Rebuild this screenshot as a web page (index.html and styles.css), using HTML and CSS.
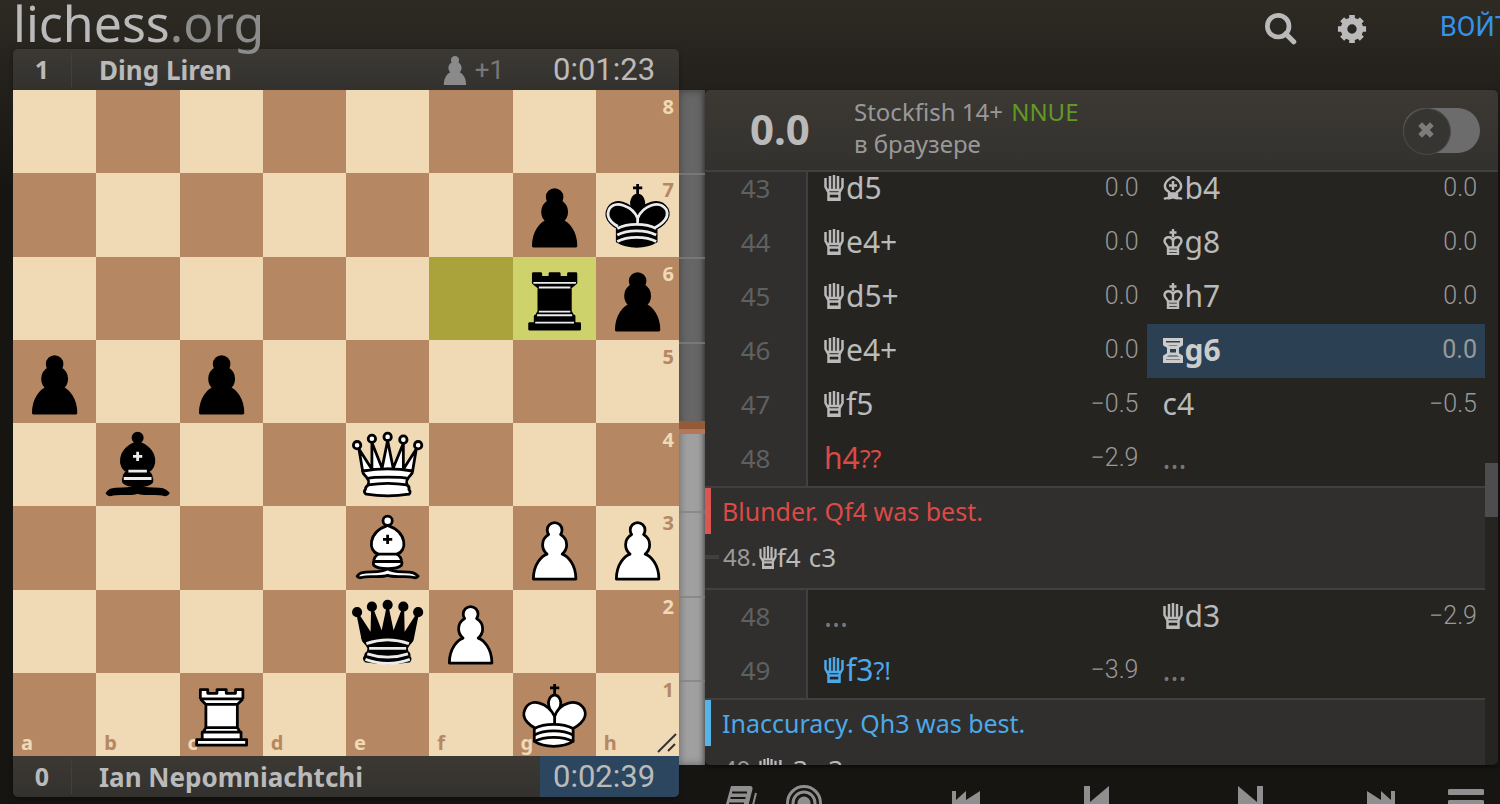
FILE: index.html
```html
<!DOCTYPE html>
<html lang="ru">
<head>
  <meta charset="UTF-8" />
  <meta name="viewport" content="width=device-width, initial-scale=1.0"/>
  <title>Ding Liren - Ian Nepomniachtchi • lichess.org</title>
  <link rel="stylesheet" href="styles.css">
</head>
<body>
  <!-- shared icons -->
  <svg class="defs" aria-hidden="true">
    <symbol id="m-q" viewBox="0 0 20 26"><path d="M1.500 3v9l3 5.500V25h11v-7.500l3-5.500V3M6 1v14M10 0v15M14 1v14M3 15h14M5 18.500h10" fill="none" stroke="currentColor" stroke-width="2.500"/><path d="M5 23.700h10" stroke="currentColor" stroke-width="2.500"/></symbol>
    <symbol id="m-k" viewBox="0 0 20 26"><path d="M10 0v8M6.500 3.500h7M10 19v-7c-1-5-8-5-8.500 0 0 3 3.500 4 3.500 7v6h10v-6c0-3 3.500-4 3.500-7-.5-5-7.500-5-8.500 0M5 18.500h10M5 21.800h10" fill="none" stroke="currentColor" stroke-width="2.400"/></symbol>
    <symbol id="m-b" viewBox="0 0 20 26"><path d="M6 17c-8-5-3-12 4-15 7 3 12 10 4 15v4H6zM10 6v9M6 10.500h8M6 18.500h8M1 24c3-2 6 .5 9-2 3 2.500 6 0 9 2" fill="none" stroke="currentColor" stroke-width="2.400"/></symbol>
    <symbol id="m-r" viewBox="0 0 20 26"><path d="M1.500 2.500h17v5l-4 2.500v7l4 2.500v5h-17v-5l4-2.500v-7l-4-2.500z" fill="none" stroke="currentColor" stroke-width="3"/><path d="M3 7h14M6 10.500h8M6 17h8M3 21h14" fill="none" stroke="currentColor" stroke-width="3"/></symbol>
  </svg>

  <header class="top">
    <a class="logo" href="#">lichess<span>.org</span></a>
    <div class="site-buttons">
      <button aria-label="Поиск">
        <svg viewBox="0 0 34 34"><circle cx="14" cy="14" r="11.500" fill="none" stroke="currentColor" stroke-width="5"/><path d="M22 22l8.500 8.500" stroke="currentColor" stroke-width="5.500" stroke-linecap="round"/></svg>
      </button>
      <button aria-label="Настройки">
        <svg viewBox="0 0 32 32"><circle cx="16" cy="16" r="8.500" fill="none" stroke="currentColor" stroke-width="7"/><path d="M16 6V1M16 26v5M6 16H1M26 16h5M9 9L5.500 5.500M23 9l3.500-3.500M9 23l-3.500 3.500M23 23l3.500 3.500" stroke="currentColor" stroke-width="6"/></svg>
      </button>
      <a class="signin" href="#">ВОЙТИ</a>
    </div>
  </header>

  <main class="analyse">
    <section class="game">
      <div class="player player-top">
        <span class="score">1</span>
        <strong>Ding Liren</strong>
        <span class="material">
          <svg viewBox="10 8 25 32"><path d="M22.500 8c-2.700 0-4.500 2-4.500 4.500 0 1 .3 2 .8 2.700C16.500 16.500 15.200 18.700 15.200 21c0 2 .8 3.800 2 5-3.200 1.500-7 6-7 14h24.600c0-8-3.800-12.500-7-14 1.200-1.200 2-3 2-5 0-2.300-1.300-4.500-3.600-5.800.5-.7.8-1.700.8-2.700 0-2.500-1.800-4.500-4.500-4.500z" fill="currentColor"/></svg>
          +1
        </span>
        <span class="clock">0:01:23</span>
      </div>
      <div class="board" id="board"></div>
      <div class="player player-bottom">
        <span class="score">0</span>
        <strong>Ian Nepomniachtchi</strong>
        <span class="clock active">0:02:39</span>
      </div>
    </section>

    <div class="gauge"><i></i><i></i><i></i><i class="zero"></i><i></i><i></i><i></i><i></i></div>

    <section class="tools">
      <div class="panel">
        <div class="engine">
          <b class="eval">0.0</b>
          <p>Stockfish 14+ <span>NNUE</span><br>в браузере</p>
          <label class="switch">
            <input type="checkbox" aria-label="Stockfish">
            <svg viewBox="0 0 20 20"><path d="M3.500 3.500l13 13M16.500 3.500l-13 13" stroke="currentColor" stroke-width="6"/></svg>
          </label>
        </div>
        <div class="moves">
          <div class="list">
            <div class="turn"><span class="index">43</span><a href="#"><svg><use href="#m-q"/></svg>d5<small>0.0</small></a><a href="#"><svg><use href="#m-b"/></svg>b4<small>0.0</small></a></div>
            <div class="turn"><span class="index">44</span><a href="#"><svg><use href="#m-q"/></svg>e4+<small>0.0</small></a><a href="#"><svg><use href="#m-k"/></svg>g8<small>0.0</small></a></div>
            <div class="turn"><span class="index">45</span><a href="#"><svg><use href="#m-q"/></svg>d5+<small>0.0</small></a><a href="#"><svg><use href="#m-k"/></svg>h7<small>0.0</small></a></div>
            <div class="turn"><span class="index">46</span><a href="#"><svg><use href="#m-q"/></svg>e4+<small>0.0</small></a><a href="#" class="current"><svg><use href="#m-r"/></svg>g6<small>0.0</small></a></div>
            <div class="turn"><span class="index">47</span><a href="#"><svg><use href="#m-q"/></svg>f5<small>−0.5</small></a><a href="#">c4<small>−0.5</small></a></div>
            <div class="turn"><span class="index">48</span><a href="#" class="blunder">h4<em>??</em><small>−2.9</small></a><span class="empty">...</span></div>
            <div class="interrupt">
              <p class="comment blunder">Blunder. Qf4 was best.</p>
              <p class="line"><a href="#"><span>48.</span><svg><use href="#m-q"/></svg>f4</a> <a href="#">c3</a></p>
            </div>
            <div class="turn"><span class="index">48</span><span class="empty">...</span><a href="#"><svg><use href="#m-q"/></svg>d3<small>−2.9</small></a></div>
            <div class="turn"><span class="index">49</span><a href="#" class="inaccuracy"><svg><use href="#m-q"/></svg>f3<em>?!</em><small>−3.9</small></a><span class="empty">...</span></div>
            <div class="interrupt">
              <p class="comment inaccuracy">Inaccuracy. Qh3 was best.</p>
              <p class="line"><a href="#"><span>49.</span><svg><use href="#m-q"/></svg>h3</a> <a href="#">c3</a></p>
            </div>
          </div>
          <div class="scroll-thumb"></div>
        </div>
      </div>

      <nav class="controls">
        <div class="group">
          <button aria-label="Дебютная книга"><svg viewBox="0 0 36 36"><path d="M9 1h19q3 0 2.500 3L24 30H1z" fill="currentColor"/><path d="M10 7.500h15M8.500 13h15M7 18.500h15" stroke="#161512" stroke-width="2"/><path d="M34 8l-6 24H6" fill="none" stroke="currentColor" stroke-width="2"/></svg></button>
          <button aria-label="Тренировка"><svg viewBox="0 0 36 36"><g fill="none" stroke="currentColor" stroke-width="3"><circle cx="18" cy="18" r="16.500"/><circle cx="18" cy="18" r="11"/></g><circle cx="18" cy="18" r="6.500" fill="currentColor"/></svg></button>
        </div>
        <div class="group jumps">
          <button aria-label="В начало"><svg viewBox="0 0 36 36"><path d="M4 6h4v9L18 6v9L32 6v24L18 20v10L8 20v10H4z" fill="currentColor"/></svg></button>
          <button aria-label="Назад"><svg viewBox="0 0 36 36"><path d="M6 1h6v16L31 1v34L12 19v16H6z" fill="currentColor"/></svg></button>
          <button aria-label="Вперёд"><svg viewBox="0 0 36 36"><path d="M30 1h-6v16L5 1v34l19-16v16h6z" fill="currentColor"/></svg></button>
          <button aria-label="В конец"><svg viewBox="0 0 36 36"><path d="M32 6h-4v9L18 6v9L4 6v24l14-10v10l10-10v10h4z" fill="currentColor"/></svg></button>
        </div>
        <button aria-label="Меню"><svg viewBox="0 0 36 36"><path d="M2 7h32M2 18h32M2 29h32" stroke="currentColor" stroke-width="6" stroke-linecap="round"/></svg></button>
      </nav>
    </section>
  </main>

<script>
  const fen = '8/6pk/6rp/p1p5/1b2Q3/4B1PP/4qP2/2R3K1';
  const lastMove = ['f6', 'g6'];

  const queenBody = 'M9 26c0 2 1.500 2 2.500 4 1 1.500 1 1 .5 3.500-1.500 1-1.500 2.500-1.500 2.500-1.500 1.500.5 2.500.5 2.500 6.500 1 16.500 1 23 0 0 0 1.500-1 0-2.500 0 0 .5-1.500-1-2.500-.5-2.500-.5-2 .5-3.500 1-2 2.500-2 2.500-4-8.500-1.500-18.500-1.500-27 0z';
  const bishop = '<path d="M9 36c3.390-.97 10.110.43 13.500-2 3.390 2.430 10.110 1.030 13.500 2 0 0 1.650.54 3 2-.68.97-1.650.99-3 .5-3.390-.97-10.110.46-13.500-1-3.390 1.460-10.110.03-13.500 1-1.350.49-2.320.47-3-.5 1.350-1.940 3-2 3-2zM15 32c2.500 2.500 12.500 2.500 15 0 .5-1.500 0-2 0-2 0-2.500-2.500-4-2.500-4 5.500-1.500 6-11.500-5-15.500-11 4-10.500 14-5 15.500 0 0-2.500 1.500-2.500 4 0 0-.5.500 0 2z"/><circle cx="22.500" cy="8" r="2.500"/><path class="detail" d="M17.500 26h10M15 30h15m-7.500-14.500v5M20 18h5"/>';
  const pawn = '<path d="M22.500 9c-2.210 0-4 1.790-4 4 0 .89.29 1.710.78 2.380C17.330 16.500 16 18.590 16 21c0 2.030.94 3.840 2.410 5.030-3 1.060-7.410 5.550-7.410 13.470h23c0-7.920-4.410-12.410-7.410-13.470 1.470-1.190 2.410-3 2.410-5.030 0-2.410-1.330-4.500-3.280-5.620.49-.67.78-1.490.78-2.380 0-2.210-1.790-4-4-4z"/>';
  const king = '<path d="M22.500 11.600V6M20 8h5"/><path d="M22.500 25s4.500-7.500 3-10.500c0 0-1-2.500-3-2.500s-3 2.500-3 2.500c-1.500 3 3 10.500 3 10.500"/><path d="M11.500 37c5.500 3.500 15.500 3.500 21 0v-7s9-4.500 6-10.500c-4-6.500-13.500-3.500-16 4V27v-3.500c-3.500-7.500-13-10.500-16-4-3 6 5 10 5 10V37z"/><path class="detail" d="M11.500 30c5.500-3 15.500-3 21 0m-21 3.500c5.500-3 15.500-3 21 0m-21 3.500c5.500-3 15.500-3 21 0"/>';
  const dots = (points, r) => points.map(([x, y]) => `<circle cx="${x}" cy="${y}" r="${r}"/>`).join('');

  const pieces = {
    P: pawn,
    p: pawn,
    B: bishop,
    b: bishop,
    K: king,
    k: king + '<path class="detail" d="M32 29.500s8.500-4 6.030-9.650C34.150 14 25 18 22.500 24.500v2.100-2.100C20 18 9.900 14 7 19.850c-2.500 5.650 4.850 9 4.850 9"/>',
    R: '<path d="M9 39h27v-3H9v3zM12 36v-4h21v4H12zM11 14V9h4v2h5V9h5v2h5V9h4v5M34 14l-3 3H14l-3-3M31 17v12.500H14V17M31 29.500l1.500 2.500h-20l1.500-2.500"/><path class="detail" d="M11 14h23"/>',
    r: '<path d="M9 39h27v-3H9v3zM12.500 32l1.500-2.500h17l1.500 2.500h-20zM12 36v-4h21v4H12zM14 29.500v-13h17v13H14zM14 16.500L11 14h23l-3 2.500H14zM11 14V9h4v2h5V9h5v2h5V9h4v5H11z"/><path class="detail thin" d="M12 35.500h21M13 31.500h19M14 29.500h17M14 16.500h17M11 14h23"/>',
    Q: dots([[6, 12], [14, 8.5], [22.5, 7.5], [31, 9], [39, 12]], 2) + `<path d="M9 26c8.500-1.500 21-1.500 27 0l2-12-7 11V11l-5.500 13.500-3-15-3 15-5.500-14V25L7 14l2 12z"/><path d="${queenBody}"/><path class="detail" d="M11.500 30c3.500-1 18.500-1 22 0M12 33.500c6-1 15-1 21 0"/>`,
    q: dots([[6, 12], [14, 9], [22.5, 8], [31, 9], [39, 12]], 2) + `<path d="M9 26c8.500-1.500 21-1.500 27 0l2.500-12.500L31 25l-.3-14.100-5.200 13.600-3-14.500-3 14.500-5.200-13.600L14 25 6.500 13.500 9 26z"/><path d="${queenBody}"/><path class="detail" d="M11 29a35 35 0 0 1 23 0M12.500 31.500h20M11.500 34.500a35 35 0 0 0 22 0M10.500 37.500a35 35 0 0 0 24 0"/>`
  };

  const board = document.getElementById('board');

  fen.split('/').forEach((row, y) => {
    const cells = row.replace(/\d/g, n => ' '.repeat(n));
    [...cells].forEach((piece, x) => {
      const key = 'abcdefgh'[x] + (8 - y);
      const square = document.createElement('div');
      square.className = 'square ' + ((x + y) % 2 ? 'dark' : 'light');
      if (lastMove.includes(key)) square.classList.add('last-move');
      let html = '';
      if (x === 7) html += `<span class="rank">${key[1]}</span>`;
      if (y === 7) html += `<span class="file">${key[0]}</span>`;
      if (piece !== ' ') {
        const color = piece === piece.toUpperCase() ? 'white' : 'black';
        html += `<svg class="piece ${color}" viewBox="0 0 45 45">${pieces[piece]}</svg>`;
      }
      if (key === 'h1') html += '<svg class="resize" viewBox="0 0 20 20"><path d="M1 19L19 1M11 18l7-7" stroke="#333" stroke-width="2"/></svg>';
      square.innerHTML = html;
      board.appendChild(square);
    });
  });
</script>

</body>
</html>
```
FILE: styles.css
```css
* { box-sizing: border-box; margin: 0; padding: 0; }
:root { --board: 44.4vw; }
html, body { height: 100%; overflow: hidden; }
body {
  font-family: 'Noto Sans', sans-serif;
  color: #bababa;
  background: #161512 linear-gradient(to bottom, #2e2a24, #161512 190px) no-repeat;
}
a { color: inherit; text-decoration: none; }
button { background: none; border: none; color: inherit; cursor: pointer; }
button svg { display: block; width: 100%; height: 100%; }
.defs { position: absolute; width: 0; height: 0; }

.top {
  position: relative; z-index: 2;
  display: flex; justify-content: space-between; align-items: flex-start;
  height: 49px;
  padding-left: 13px;
}
.logo { font-size: 50px; line-height: 46px; white-space: nowrap; }
.logo span { color: #8c8c8c; }
.site-buttons { display: flex; align-items: center; padding-top: 11px; }
.site-buttons button { width: 32px; height: 32px; margin-right: 40px; }
.site-buttons button + button { width: 30px; height: 30px; margin-right: 73px; }
.signin { width: 60px; padding-bottom: 3px; font: 27px/32px Roboto, sans-serif; color: #3692e7; white-space: nowrap; }

.analyse {
  display: grid;
  grid-template-columns: var(--board) 26px 1fr;
  padding: 0 2px 0 13px;
}

.player {
  display: flex; align-items: center;
  height: 41px;
  background: linear-gradient(to bottom, #3c3934, #33312e);
  font-size: 26px;
  box-shadow: 0 2px 5px rgba(0, 0, 0, 0.4);
}
.player-top { border-radius: 5px 5px 0 0; }
.player-bottom { border-radius: 0 0 5px 5px; overflow: hidden; }
.player strong { line-height: 39px; padding-top: 2px; }
.score {
  width: 59px; margin-right: 27px;
  border-right: 1px solid #404040;
  text-align: center; font-weight: bold; font-size: 25px;
  line-height: 35px;
}
.material {
  display: flex; align-items: center; gap: 8px;
  margin-left: auto; margin-right: 49px;
  padding-top: 2px;
  font: 26px/39px Roboto, sans-serif; color: #787878;
}
.material svg { width: 24px; height: 29px; color: #8a8a8a; }
.clock { width: 139px; padding-left: 13px; font: 31px/41px Roboto, sans-serif; }
.clock.active { margin-left: auto; background: #2b465e; }
.player-top .clock { width: 126px; padding-left: 0; }

.board {
  display: grid;
  grid-template: repeat(8, 1fr) / repeat(8, 1fr);
  aspect-ratio: 1;
}
.square { position: relative; min-width: 0; min-height: 0; }
.square.light { background: #f0d9b5; color: #b58863; }
.square.dark { background: #b58863; color: #f0d9b5; }
.square.light.last-move { background: #cdd26a; }
.square.dark.last-move { background: #aaa23a; }
.rank, .file { position: absolute; font-size: 20px; line-height: 24px; font-weight: bold; }
.rank { top: 5px; right: 5px; }
.file { bottom: 1px; left: 8px; }
.piece {
  position: absolute; inset: 0; width: 100%; height: 100%;
  stroke: #000; stroke-width: 1.5px; stroke-linejoin: round; fill-rule: evenodd;
}
.piece.white { fill: #fff; }
.piece.black { fill: #000; }
.piece .detail { fill: none; }
.piece.black .detail { stroke: #ececec; }
.piece .thin { stroke-width: 1px; }
.resize { position: absolute; right: 2px; bottom: 3px; width: 20px; height: 20px; }

.gauge {
  display: flex; flex-direction: column;
  height: calc(var(--board) + 9px);
  margin-top: 41px;
  background: linear-gradient(to bottom, #666 50%, #a0a0a0 50%);
  box-shadow: inset 0 0 8px rgba(0, 0, 0, 0.4);
}
.gauge i { position: relative; flex: 1; border-bottom: 2px solid rgba(128, 128, 128, 0.7); }
.gauge i:last-child { border: none; }
.gauge .zero::after {
  content: '';
  position: absolute; left: 0; right: 0; bottom: -7px; height: 13px;
  background: linear-gradient(to bottom, #945b39 8px, #b5775a 8px);
}

.tools { min-width: 0; margin-top: 41px; }
.panel {
  display: flex; flex-direction: column;
  height: calc(var(--board) + 9px);
  border-radius: 5px;
  background: #262421;
  overflow: hidden;
  box-shadow: 0 2px 5px rgba(0, 0, 0, 0.5);
}
.engine {
  display: flex; align-items: center;
  height: 82px;
  padding: 0 18px 4px 45px;
  background: linear-gradient(to bottom, #3c3934, #33312e);
  border-bottom: 2px solid #404040;
}
.eval { width: 104px; font-size: 42px; }
.engine p { font-size: 24px; line-height: 32px; color: #999; }
.engine p span { color: #629924; margin-left: 2px; }
.switch { position: relative; margin-left: auto; margin-top: 4px; display: flex; }
.switch input {
  appearance: none;
  width: 77px; height: 45px;
  border-radius: 23px;
  background: #6c6c6c;
  cursor: pointer;
}
.switch input::before {
  content: '';
  display: block;
  width: 46px; height: 45px;
  border: 1px solid #4a4a4a; border-radius: 50%;
  background: #373531;
}
.switch svg { position: absolute; top: 13px; left: 14px; width: 18px; height: 18px; color: #7c7c7c; pointer-events: none; }

.moves { position: relative; flex: 1; min-height: 0; overflow: hidden; padding-right: 13px; }
/* list is scrolled a little past the first row */
.list { margin-top: -10px; }
.turn { display: grid; grid-template-columns: 103px 1fr 1fr; height: 54px; line-height: 52px; }
.index {
  background: #302f2d; border-right: 2px solid #404040;
  color: #606060; font-size: 26px; text-align: center;
}
.turn a, .empty { display: flex; align-items: center; padding: 0 8px 2px 16px; font-size: 30px; }
.turn a svg { width: 20px; height: 26px; margin-right: 2px; }
.turn a em { font-size: 25px; font-style: normal; }
.turn a small { margin-left: auto; font: 300 25px/52px Roboto, sans-serif; color: #999; }
.turn .current { background: #2b4053; font-weight: bold; color: #ccc; }
.turn .current small { font-weight: 400; }
.empty { color: #787878; }
.turn .blunder, .comment.blunder { color: #db4a47; }
.turn .inaccuracy, .comment.inaccuracy { color: #4da8e8; }

.interrupt {
  height: 104px;
  border-top: 2px solid #404040; border-bottom: 2px solid #404040;
  background: #302f2d;
}
.comment { padding-left: 11px; border-left: 6px solid #db5553; font-size: 25px; line-height: 46px; }
.comment.inaccuracy { border-color: #56b4e9; }
.line { display: flex; align-items: center; gap: 8px; font-size: 26px; line-height: 46px; }
.line::before { content: ''; width: 14px; height: 4px; margin-right: -4px; background: #404040; }
.line a { display: flex; align-items: center; }
.line span { font-size: 24px; color: #999; }
.line svg { width: 18px; height: 23px; margin-left: 2px; }
.scroll-thumb { position: absolute; right: 0; top: 291px; width: 13px; height: 54px; background: #4d4d4d; }

.controls { display: flex; justify-content: space-between; padding: 20px 14px 0 17px; color: #8f8f8f; }
.controls button { width: 36px; height: 36px; }
.group { display: flex; gap: 28px; }
.jumps { flex: 1; justify-content: space-between; padding: 0 49px 0 126px; }
.jumps button:nth-child(2) { margin-right: 24px; }
```
